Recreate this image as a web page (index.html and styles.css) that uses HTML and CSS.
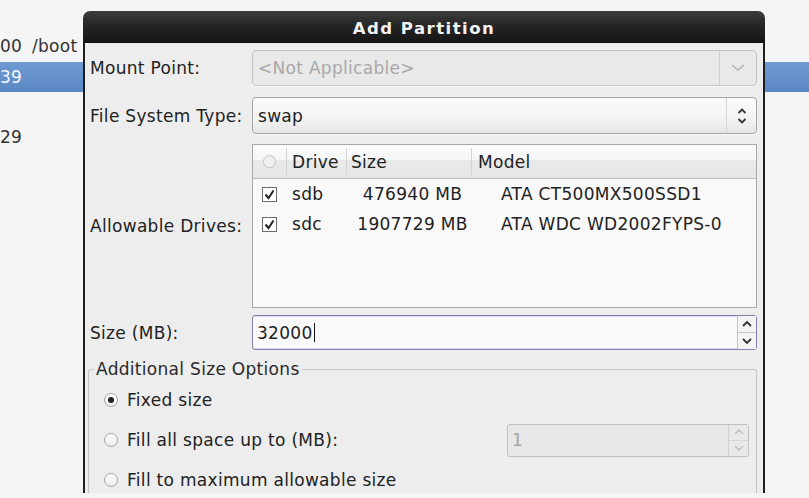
FILE: index.html
```html
<!DOCTYPE html>
<html>
<head>
<meta charset="utf-8">
<title>Add Partition</title>
<link rel="stylesheet" href="styles.css">
</head>
<body>
<div class="screen">
  <div class="bglist">
    <div class="bgrow first"><span class="c1">00</span><span class="c2">/boot</span></div>
    <div class="bgrow sel"><span class="c1">39</span></div>
    <div class="bgrow third"><span class="c1">29</span></div>
  </div>

  <div class="dialog">
    <div class="titlebar">Add Partition</div>
    <div class="dbody">
      <div class="frow gap11">
        <div class="lbl">Mount Point:</div>
        <div class="combo disabled">
          <span class="ctext">&lt;Not Applicable&gt;</span>
          <span class="cbtn wide">
            <svg width="16" height="10" viewBox="0 0 16 10"><path d="M2 2 L8 7 L14 2" fill="none" stroke="#b4b4b4" stroke-width="1.6"/></svg>
          </span>
        </div>
      </div>

      <div class="frow gap10">
        <div class="lbl">File System Type:</div>
        <div class="combo active">
          <span class="ctext">swap</span>
          <span class="cbtn">
            <svg width="12" height="20" viewBox="0 0 12 20"><path d="M2.5 7 L6 3.5 L9.5 7" fill="none" stroke="#333" stroke-width="1.8"/><path d="M2.5 13 L6 16.5 L9.5 13" fill="none" stroke="#333" stroke-width="1.8"/></svg>
          </span>
        </div>
      </div>

      <div class="frow gap7">
        <div class="lbl">Allowable Drives:</div>
        <div class="tree">
          <div class="thead">
            <div class="tc col1"><span class="hradio"></span></div>
            <div class="tc col2 sep">Drive</div>
            <div class="tc col3 sep">Size</div>
            <div class="tc col4 sep">Model</div>
          </div>
          <div class="trow">
            <div class="tc col1"><span class="check"><svg width="13" height="13" viewBox="0 0 13 13"><path d="M2.5 6.5 L5.5 10 L10.5 2.5" fill="none" stroke="#222" stroke-width="2"/></svg></span></div>
            <div class="tc col2 dv">sdb</div>
            <div class="tc col3 sz">476940 MB</div>
            <div class="tc col4 md">ATA CT500MX500SSD1</div>
          </div>
          <div class="trow">
            <div class="tc col1"><span class="check"><svg width="13" height="13" viewBox="0 0 13 13"><path d="M2.5 6.5 L5.5 10 L10.5 2.5" fill="none" stroke="#222" stroke-width="2"/></svg></span></div>
            <div class="tc col2 dv">sdc</div>
            <div class="tc col3 sz">1907729 MB</div>
            <div class="tc col4 md">ATA WDC WD2002FYPS-0</div>
          </div>
        </div>
      </div>

      <div class="frow">
        <div class="lbl">Size (MB):</div>
        <div class="spin focus">
          <span class="stext">32000<span class="caret"></span></span>
          <span class="sbtns">
            <span class="sb"><svg width="12" height="8" viewBox="0 0 12 8"><path d="M2 6 L6 2 L10 6" fill="none" stroke="#333" stroke-width="1.8"/></svg></span>
            <span class="sb"><svg width="12" height="8" viewBox="0 0 12 8"><path d="M2 2 L6 6 L10 2" fill="none" stroke="#333" stroke-width="1.8"/></svg></span>
          </span>
        </div>
      </div>

      <fieldset class="frame">
        <legend>Additional Size Options</legend>
        <div class="ropt">
          <span class="radio on"></span><span class="rtext">Fixed size</span>
        </div>
        <div class="ropt">
          <span class="radio"></span><span class="rtext">Fill all space up to (MB):</span>
          <div class="spin small disabled">
            <span class="stext">1</span>
            <span class="sbtns">
              <span class="sb"><svg width="12" height="8" viewBox="0 0 12 8"><path d="M2 6 L6 2 L10 6" fill="none" stroke="#bbb" stroke-width="1.4"/></svg></span>
              <span class="sb"><svg width="12" height="8" viewBox="0 0 12 8"><path d="M2 2 L6 6 L10 2" fill="none" stroke="#bbb" stroke-width="1.4"/></svg></span>
            </span>
          </div>
        </div>
        <div class="ropt">
          <span class="radio"></span><span class="rtext">Fill to maximum allowable size</span>
        </div>
      </fieldset>
    </div>
  </div>
</div>
</body>
</html>
```

FILE: styles.css
```css
* { box-sizing: border-box; }
html, body { margin: 0; padding: 0; }
body {
  width: 809px;
  height: 498px;
  overflow: hidden;
  background: #f5f5f5;
  font-family: "DejaVu Sans", "Noto Sans", sans-serif;
  font-size: 17px;
  letter-spacing: 0.3px;
  color: #222;
}
.screen {
  position: relative;
  width: 809px;
  height: 498px;
}

/* background list behind the dialog */
.bglist {
  padding-top: 30px;
  display: flex;
  flex-direction: column;
}
.bgrow {
  height: 30px;
  display: flex;
  align-items: center;
  color: #333;
}
.bgrow.first { height: 32px; }
.bgrow.sel {
  background: linear-gradient(#6f9ad2, #5b88c4);
  color: #f4f8ff;
}
.bgrow.third { margin-top: 30px; }
.c1 { width: 32px; }

/* dialog window */
.dialog {
  position: absolute;
  left: 83px;
  top: 11px;
  width: 682px;
  height: 482px;
  display: flex;
  flex-direction: column;
}
.titlebar {
  flex: none;
  height: 32px;
  padding-top: 3px;
  background: linear-gradient(#3d3d3d, #262626 45%, #161616);
  border-radius: 7px 7px 0 0;
  color: #f2f2f2;
  font-weight: bold;
  font-size: 16.5px;
  letter-spacing: 1.5px;
  display: flex;
  align-items: center;
  justify-content: center;
  border-bottom: 1px solid #0c0c0c;
}
.dbody {
  flex: 1;
  min-height: 0;
  overflow: hidden;
  background: #ededed;
  border-left: 2px solid #1e1e1e;
  border-right: 2px solid #1e1e1e;
  padding: 7px 6px 0 3px;
}

.frow {
  display: flex;
  align-items: center;
}
.frow.gap11 { margin-bottom: 11px; }
.frow.gap10 { margin-bottom: 10px; }
.frow.gap7 { margin-bottom: 7px; }
.lbl {
  width: 164px;
  flex: none;
  padding-left: 2px;
  white-space: nowrap;
}
.frow > .combo, .frow > .tree, .frow > .spin { flex: 1; }

/* combo boxes */
.combo {
  height: 36px;
  border: 1px solid #b4b4b4;
  border-radius: 4px;
  display: flex;
  align-items: center;
  box-shadow: 0 1px 0 #fafafa;
}
.combo.disabled {
  background: #e9e9e9;
  color: #a8a8a8;
  border-color: #c2c2c2;
}
.combo.active {
  height: 37px;
  background: linear-gradient(#fbfbfb, #f3f3f3 60%, #e6e6e6);
  border-color: #a6a6a6;
}
.ctext {
  flex: 1;
  padding-left: 5px;
}
.cbtn {
  width: 30px;
  align-self: stretch;
  border-left: 1px solid #d6d6d6;
  display: flex;
  align-items: center;
  justify-content: center;
}
.cbtn.wide { width: 37px; border-left-color: #cfcfcf; }

/* tree view */
.tree {
  height: 164px;
  border: 1px solid #a9a9a9;
  background: #f9f9f9;
}
.thead {
  height: 34px;
  display: flex;
  background: linear-gradient(#fbfbfb 0%, #f6f6f6 45%, #e9e9e9 46%, #e6e6e6 100%);
  border-bottom: 1px solid #bdbdbd;
}
.trow {
  height: 30px;
  display: flex;
}
.tc {
  display: flex;
  align-items: center;
  white-space: nowrap;
}
.col1 { width: 33px; justify-content: center; }
.col2 { width: 60px; padding-left: 5px; }
.col3 { width: 125px; padding-left: 4px; }
.col4 { flex: 1; padding-left: 6px; }
.thead .sep {
  border-left: 1px solid #d2d2d2;
  margin: 3px 0 3px;
}
.sz { justify-content: center; padding-left: 8px; }
.md { padding-left: 30px; }
.dv { padding-left: 6px; }
.hradio {
  width: 13px;
  height: 13px;
  border-radius: 50%;
  border: 1px solid #c4c4c4;
  background: #f0f0f0;
}
.check {
  width: 15px;
  height: 15px;
  border: 1px solid #6c6c6c;
  background: #fff;
  display: flex;
  align-items: center;
  justify-content: center;
}

/* spin buttons */
.spin {
  height: 35px;
  border: 1px solid #b0b0b0;
  border-radius: 3px;
  display: flex;
  align-items: stretch;
  background: #f9f9f9;
}
.spin.focus {
  border-color: #8080aa;
  box-shadow: inset 0 1px 0 #dcdcf2, inset 0 -1px 0 #dcdcf2;
}
.stext {
  flex: 1;
  display: flex;
  align-items: center;
  padding-left: 4px;
}
.caret {
  display: inline-block;
  width: 1px;
  height: 19px;
  background: #111;
  margin-left: 1px;
}
.sbtns {
  width: 19px;
  display: flex;
  flex-direction: column;
  border-left: 1px solid #c4c4c4;
  background: #f4f4f4;
}
.sb {
  flex: 1;
  display: flex;
  align-items: center;
  justify-content: center;
}
.sb + .sb { border-top: 1px solid #c8c8c8; }

.spin.small {
  width: 242px;
  height: 33px;
  margin-left: auto;
  margin-right: 7px;
}
.spin.disabled {
  background: #e7e7e7;
  border-color: #c0c0c0;
  color: #a6a6a6;
}
.spin.disabled .sbtns {
  width: 20px;
  background: #e9e9e9;
  border-left-color: #d0d0d0;
}
.spin.disabled .sb + .sb { border-top-color: #d6d6d6; }

/* frame */
.frame {
  margin: 10px 0 0 0;
  padding: 2px 0 0 0;
  border: 1px solid #c6c6c6;
  border-bottom: none;
  border-radius: 3px 3px 0 0;
  min-width: 0;
}
.frame legend {
  margin-left: 5px;
  padding: 0 2px;
  line-height: 18px;
  color: #2a2a2a;
}
.ropt {
  height: 40px;
  display: flex;
  align-items: center;
  padding-left: 15px;
}
.radio {
  width: 14px;
  height: 14px;
  border-radius: 50%;
  border: 1px solid #a4a4a4;
  background: linear-gradient(#ffffff, #ececec);
  display: flex;
  align-items: center;
  justify-content: center;
  flex: none;
}
.radio.on::after {
  content: "";
  width: 6px;
  height: 6px;
  border-radius: 50%;
  background: #222;
}
.rtext {
  margin-left: 9px;
  white-space: nowrap;
}
```
